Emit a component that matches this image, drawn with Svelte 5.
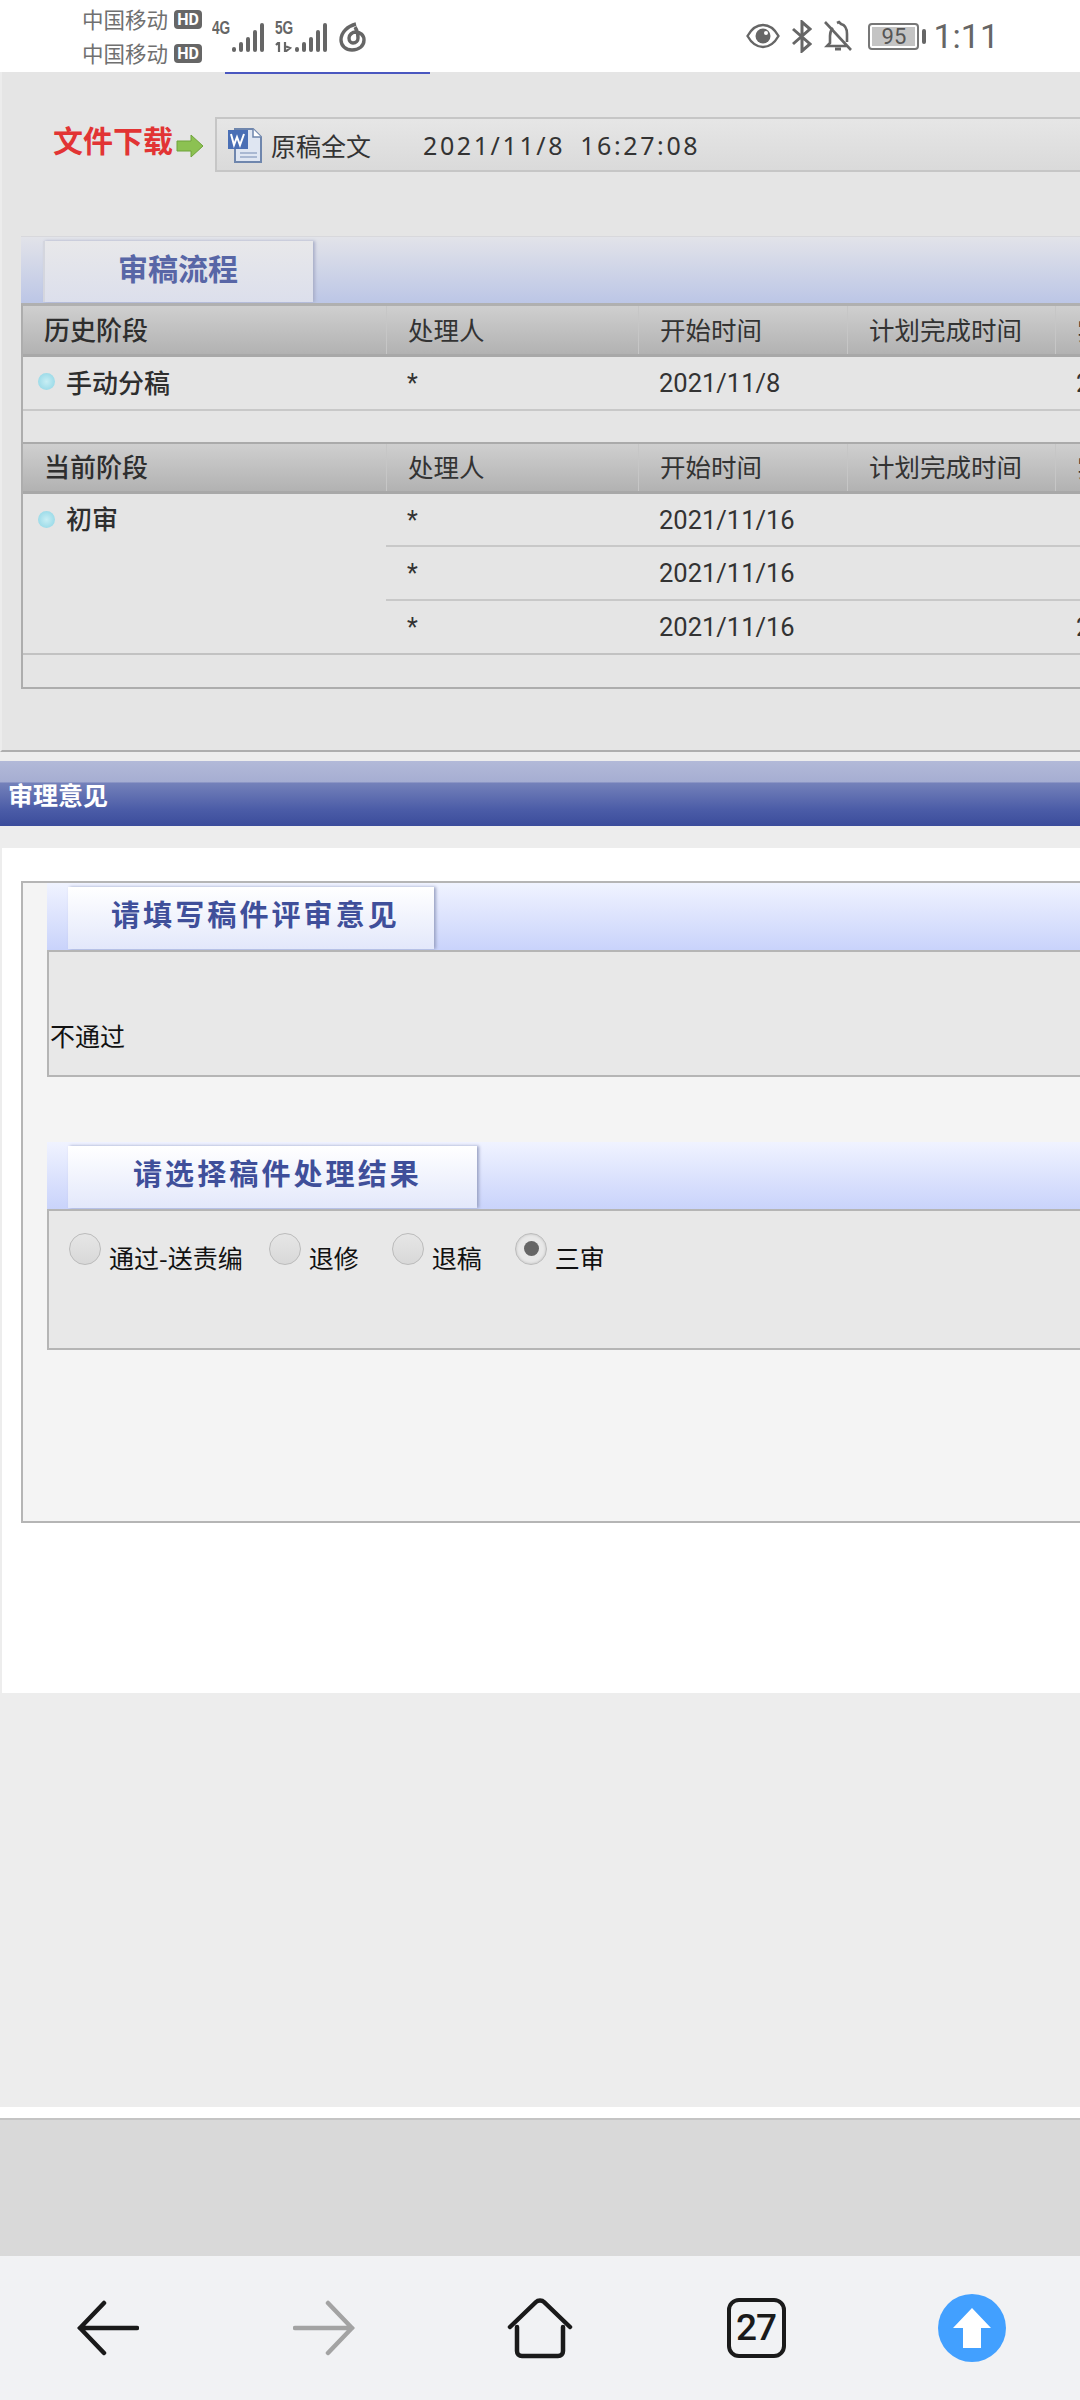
<script>
  const sans = ['历史阶段', '处理人', '开始时间', '计划完成时间', '实际完成时间'];
  const current = ['当前阶段', '处理人', '开始时间', '计划完成时间', '实际完成时间'];
  const currentRows = [
    { date: '2021/11/16', end: '' },
    { date: '2021/11/16', end: '' },
    { date: '2021/11/16', end: '2021/11/16' }
  ];
  const results = [
    { label: '通过-送责编', checked: false },
    { label: '退修', checked: false },
    { label: '退稿', checked: false },
    { label: '三审', checked: true }
  ];
  const signal = [5, 10, 15, 22, 29];
</script>

<div class="phone">
  <header class="status">
    <div class="left">
      <div class="carriers">
        <div class="carrier">中国移动 <span class="hd">HD</span></div>
        <div class="carrier">中国移动 <span class="hd">HD</span></div>
      </div>
      <div class="net">
        <span class="gen">4G</span>
        <div class="bars">
          {#each signal as h}<i style="height:{h}px"></i>{/each}
        </div>
      </div>
      <div class="net five">
        <span class="gen">5G</span>
        <div class="bars">
          <svg width="18" height="10" viewBox="0 0 18 10"><path d="M4 0v10M1 3l3-3M10 0v10l5-4-5-2" fill="none" stroke="#666" stroke-width="2.2"/></svg>
          {#each signal as h}<i style="height:{h}px"></i>{/each}
        </div>
      </div>
      <svg class="cloud" width="28" height="30" viewBox="0 0 28 30" fill="none" stroke="#666" stroke-width="3.4">
        <path d="M17 2C9 4 2 10 2 18c0 6 5 10 11 10 7 0 12-4 12-10 0-5-4-8-8-8-4 0-7 3-7 6 0 3 2 5 4 5 3 0 5-2 5-5 0-4-1-8-3-11"/>
      </svg>
    </div>
    <div class="right">
      <svg width="34" height="26" viewBox="0 0 34 26">
        <path d="M1.5 13C6 5 11 2 17 2s11 3 15.500 11C28 21 23 24 17 24S6 21 1.500 13z" fill="none" stroke="#666" stroke-width="2.400"/>
        <circle cx="17" cy="13" r="7.500" fill="#666"/><circle cx="20" cy="10" r="2" fill="#fff"/>
      </svg>
      <svg width="20" height="33" viewBox="0 0 20 33" fill="none" stroke="#666" stroke-width="3">
        <path d="M1 9l17 15-8 7V2l8 7L1 24"/>
      </svg>
      <svg width="28" height="32" viewBox="0 0 28 32" fill="none" stroke="#666" stroke-width="2.600">
        <path d="M1 2l26 28M9 8c-2 2-3 5-3 8v7l-3 3h20M13 3l2-1 2 2c4 1 6 5 6 10v8"/>
        <path d="M11 29h6" stroke-width="3"/>
      </svg>
      <div class="battery">
        <div class="cell"><span>95</span></div>
        <i></i>
      </div>
      <span class="time">1:11</span>
    </div>
  </header>

  <div class="content">
    <section class="upper">
      <div class="strip"></div>
      <div class="download">
        <span class="dl-label">文件下载</span>
        <svg class="dl-arrow" width="28" height="24" viewBox="0 0 28 24">
          <path d="M1 7h14V1l12 11-12 11v-6H1z" fill="#8cc152" stroke="#6fa33a" stroke-width="1"/>
        </svg>
        <div class="dl-box">
          <svg width="36" height="36" viewBox="0 0 36 36">
            <path d="M8 2h18l8 8v25H8z" fill="#dfe6f2" stroke="#6f86ad" stroke-width="2"/>
            <path d="M26 2v8h8" fill="#fff" stroke="#6f86ad" stroke-width="1.500"/>
            <rect x="1" y="3" width="20" height="19" fill="#4a6fb5"/>
            <path d="M4 7l3 11 3-8 3 8 4-11" fill="none" stroke="#fff" stroke-width="2"/>
            <path d="M13 26h17M13 30h17" stroke="#a9b8d2" stroke-width="2"/>
          </svg>
          <span class="dl-name">原稿全文</span>
          <span class="dl-date">2021/11/8 16:27:08</span>
        </div>
      </div>

      <div class="flow">
        <div class="flow-head">
          <div class="flow-tab">审稿流程</div>
        </div>
        <div class="flow-table">
          <div class="row head">
            {#each sans as c, i}
              <div class="cell" class:first={i === 0}>{c}</div>
            {/each}
          </div>
          <div class="row body">
            <div class="cell stage"><b class="dot"></b>手动分稿</div>
            <div class="cell star">*</div>
            <div class="cell">2021/11/8</div>
            <div class="cell"></div>
            <div class="cell">2021/11/8</div>
          </div>
          <div class="spacer"></div>
          <div class="row head">
            {#each current as c, i}
              <div class="cell" class:first={i === 0}>{c}</div>
            {/each}
          </div>
          <div class="current">
            <div class="cell stage top"><b class="dot"></b>初审</div>
            <div class="cur-rows">
              {#each currentRows as r}
                <div class="row sub">
                  <div class="cell star">*</div>
                  <div class="cell">{r.date}</div>
                  <div class="cell"></div>
                  <div class="cell">{r.end}</div>
                </div>
              {/each}
            </div>
          </div>
          <div class="spacer end"></div>
        </div>
      </div>
    </section>

    <div class="band">审理意见</div>

    <section class="panel">
      <div class="box">
        <div class="sec-head"><div class="sec-tab wide">请填写稿件评审意见</div></div>
        <div class="sec-body opinion">不通过</div>

        <div class="sec-head second"><div class="sec-tab wider">请选择稿件处理结果</div></div>
        <div class="sec-body radios">
          {#each results as r}
            <div class="radio-item">
              <span class="radio" class:on={r.checked}></span>
              <span class="radio-label">{r.label}</span>
            </div>
          {/each}
        </div>
      </div>
    </section>

    <div class="rest"></div>
    <div class="foot"></div>
  </div>

  <nav class="nav">
    <svg width="62" height="56" viewBox="0 0 62 56" fill="none" stroke="#1a1a1a" stroke-width="4.500" stroke-linecap="round">
      <path d="M3 28h57M27 3L3 28l24 25"/>
    </svg>
    <svg width="62" height="56" viewBox="0 0 62 56" fill="none" stroke="#a3a3a3" stroke-width="4.500" stroke-linecap="round">
      <path d="M59 28H2M35 3l24 25-24 25"/>
    </svg>
    <svg width="66" height="62" viewBox="0 0 66 62" fill="none" stroke="#1a1a1a" stroke-width="4.500" stroke-linecap="round" stroke-linejoin="round">
      <path d="M3 30L29 5c2-2 6-2 8 0l26 25M10 30v24c0 3 2 5 5 5h36c3 0 5-2 5-5V30"/>
    </svg>
    <div class="tabs">27</div>
    <svg width="68" height="68" viewBox="0 0 68 68">
      <circle cx="34" cy="34" r="34" fill="#42a0ff"/>
      <path d="M34 14l19 20H43v20H25V34H15z" fill="#fff"/>
    </svg>
  </nav>
</div>

<style>
  :global(body) { margin: 0; }
  .phone {
    width: 1080px;
    height: 2400px;
    display: flex;
    flex-direction: column;
    overflow: hidden;
    font-family: "Noto Sans CJK SC", Roboto, sans-serif;
    background: #ededed;
  }

  .status {
    height: 72px;
    flex: none;
    background: #fff;
    display: flex;
    justify-content: space-between;
    align-items: center;
    padding: 0 81px 0 82px;
    color: #666;
  }
  .left, .right { display: flex; align-items: center; }
  .carriers { display: flex; flex-direction: column; gap: 12px; }
  .carrier { font-size: 21.500px; line-height: 22px; display: flex; gap: 6px; align-items: center; color: #707070; }
  .hd {
    background: #666;
    color: #fff;
    font: 700 16px/19px Roboto, sans-serif;
    width: 28px;
    height: 19px;
    text-align: center;
    border-radius: 4px;
  }
  .net { position: relative; height: 32px; width: 52px; margin-left: 10px; }
  .net.five { margin-left: 11px; }
  .gen {
    position: absolute;
    left: 0;
    top: -2px;
    font: 700 19px/20px "Liberation Sans", sans-serif;
    transform: scaleX(.72);
    transform-origin: left;
  }
  .bars {
    position: absolute;
    right: 0;
    bottom: 0;
    display: flex;
    align-items: flex-end;
    gap: 3px;
  }
  .bars i { width: 4px; background: #666; border-radius: 2px; }
  .bars svg { margin-right: -1px; }
  .five { width: 52px; }
  .cloud { margin-left: 12px; margin-top: 2px; }

  .right { gap: 12px; }
  .battery { display: flex; align-items: center; gap: 3px; margin-left: 4px; }
  .battery .cell {
    width: 51px;
    height: 27px;
    box-sizing: border-box;
    border: 2px solid #777;
    border-radius: 4px;
    padding: 2px;
    display: flex;
  }
  .battery .cell span {
    flex: 1;
    background: #c4c4c4;
    font: 22px/19px Roboto, sans-serif;
    text-align: center;
    color: #555;
  }
  .battery i { width: 4px; height: 15px; background: #666; border-radius: 2px; }
  .time { font: 34px/40px Roboto, sans-serif; margin-left: -5px; }

  .content { flex: 1; display: flex; flex-direction: column; min-height: 0; }

  .upper {
    height: 680px;
    flex: none;
    box-sizing: border-box;
    background: #e5e5e5;
    border-left: 2px solid #ececec;
    border-bottom: 2px solid #aeaeae;
  }
  .strip { height: 2px; width: 205px; margin-left: 223px; background: #4a57c0; }
  .download { display: flex; align-items: center; padding: 43px 0 0 51px; height: 55px; }
  .dl-label { flex: none; font-size: 30px; font-weight: 700; color: #e23434; width: 123px; line-height: 55px; white-space: nowrap; margin-top: -10px; }
  .dl-arrow { flex: none; margin-right: 11px; margin-top: 2px; }
  .dl-box {
    flex: none;
    width: 900px;
    height: 55px;
    box-sizing: border-box;
    border: 2px solid #c6c6c6;
    border-right: 0;
    background: linear-gradient(#e6e6e6, #dadada);
    display: flex;
    align-items: center;
    padding-left: 10px;
    color: #333;
  }
  .dl-name { font-size: 25px; margin-left: 8px; width: 152px; }
  .dl-date { font: 25px "Noto Sans", sans-serif; letter-spacing: 2.600px; word-spacing: 6px; }

  .flow { margin: 64px 0 0 19px; width: 1200px; }
  .flow-head {
    height: 67px;
    box-sizing: border-box;
    padding: 4px 0 0 22px;
    background: linear-gradient(#e2e3e9, #bcc6e6);
    border-top: 1px solid #d8d8dc;
  }
  .flow-tab {
    width: 270px;
    height: 61px;
    box-sizing: border-box;
    background: linear-gradient(#e8e8ea, #dcdfec);
    box-shadow: 2px 0 3px #a8aec8;
    border-left: 2px solid #d4d6de;
    color: #5866a6;
    font-size: 30px;
    font-weight: 700;
    line-height: 52px;
    text-align: center;
    padding-right: 2px;
  }
  .flow-table {
    border-left: 2px solid #adadad;
    border-bottom: 2px solid #adadad;
    border-top: 3px solid #b0b0b0;
    color: #333;
  }
  .row { display: grid; grid-template-columns: 363px 252px 209px 208px 200px; }
  .row .cell, .current > .cell { box-sizing: border-box; }
  .head {
    height: 51px;
    background: linear-gradient(#cfcfcf, #b2b2b2);
    border-bottom: 3px solid #a8a8a8;
    box-sizing: border-box;
    font-size: 25.500px;
    line-height: 46px;
  }
  .head .cell { padding-left: 21px; border-left: 1px solid #c6c6c6; white-space: nowrap; }
  .head .first { padding-left: 21px; border-left: 0; font-weight: 500; font-size: 26px; color: #2e2e2e; }
  .body {
    height: 54px;
    box-sizing: border-box;
    border-bottom: 2px solid #c8c8c8;
    font: 25.500px/52px Roboto, "Noto Sans CJK SC", sans-serif;
  }
  .body .cell, .sub .cell { padding-left: 21px; white-space: nowrap; }
  .stage {
    flex: none;
    font: 500 26px/48px "Noto Sans CJK SC", sans-serif;
    color: #2e2e2e;
    display: flex;
    align-items: center;
    padding-left: 15px !important;
    gap: 11px;
  }
  .body .stage { padding-bottom: 4px; }
  .stage.top { align-items: flex-start; width: 363px; height: 159px; }
  .star { font-size: 25px; line-height: 53px !important; }
  .dot {
    flex: none;
    width: 17px;
    height: 17px;
    border-radius: 50%;
    background: radial-gradient(circle at 50% 50%, #c8eef4, #8cd4e4);
  }
  .stage.top .dot { margin-top: 17px; }
  .spacer { height: 31px; }
  .spacer.end { height: 32px; }
  .flow-table > .head:not(:first-child) { border-top: 2px solid #aaa; height: 52px; line-height: 44px; }
  .current { display: flex; border-bottom: 2px solid #c2c2c2; }
  .cur-rows { flex: 1; }
  .sub {
    grid-template-columns: 252px 209px 208px 200px;
    height: 54px;
    box-sizing: border-box;
    border-bottom: 2px solid #c8c8c8;
    font: 25.500px/52px Roboto, "Noto Sans CJK SC", sans-serif;
  }
  .sub:first-child { height: 53px; }
  .sub:last-child { border-bottom: 0; height: 52px; }

  .band {
    flex: none;
    margin-top: 9px;
    height: 65px;
    background: linear-gradient(#b2b9d8 0, #a6aed2 32%, #7481ba 34%, #4b5ca7 75%, #3b4c9b 100%);
    color: #fff;
    font-size: 25px;
    font-weight: 700;
    line-height: 66px;
    padding-left: 8px;
  }
  .panel {
    flex: none;
    margin: 22px 0 0 2px;
    height: 845px;
    box-sizing: border-box;
    background: #fff;
    padding: 33px 0 0 19px;
  }
  .box {
    width: 1200px;
    height: 642px;
    box-sizing: border-box;
    background: #f4f4f4;
    border: 2px solid #b5b5b5;
    padding-left: 24px;
  }
  .sec-head {
    height: 67px;
    box-sizing: border-box;
    padding: 4px 0 0 21px;
    background: linear-gradient(#f0f3ff, #c9d3fb);
  }
  .sec-head.second { margin-top: 65px; }
  .sec-tab {
    height: 62px;
    box-sizing: border-box;
    background: linear-gradient(#fff, #e3e8fb);
    box-shadow: 2px 0 3px #9aa2c4;
    color: #3f4f9a;
    font-size: 29px;
    font-weight: 700;
    line-height: 52px;
    letter-spacing: 3.100px;
  }
  .wide { width: 366px; padding-left: 43px; }
  .wider { width: 409px; padding-left: 65px; }
  .sec-body {
    box-sizing: border-box;
    background: #e8e8e8;
    border: 2px solid #b5b5b5;
    border-right: 0;
    color: #111;
    font-size: 25px;
  }
  .opinion { height: 127px; padding: 65px 0 0 1px; line-height: 36px; }
  .radios {
    height: 141px;
    display: flex;
    align-items: flex-start;
    padding: 22px 0 0 20px;
    gap: 33px;
  }
  .radio-item { display: flex; gap: 8px; align-items: flex-start; flex: none; }
  .radio-item:first-child { margin-right: -7px; }
  .radio {
    flex: none;
    width: 32px;
    height: 32px;
    box-sizing: border-box;
    border-radius: 50%;
    border: 1px solid #bbb;
    background: linear-gradient(#e6e6e6, #d8d8d8);
    position: relative;
  }
  .radio.on { background: #e8e8e8; box-shadow: inset 0 0 3px #bbb; }
  .radio.on::after {
    content: "";
    position: absolute;
    left: 8px;
    top: 7px;
    width: 15px;
    height: 15px;
    border-radius: 50%;
    background: #666;
  }
  .radio-label { line-height: 34px; margin-top: 7px; }

  .rest { flex: none; height: 414px; background: #ededed; }
  .foot {
    flex: 1;
    background: #d9d9d9;
    border-top: 11px solid #fff;
    box-shadow: inset 0 2px 0 #c4c4c4;
  }

  .nav {
    height: 144px;
    flex: none;
    background: #f1f2f4;
    display: grid;
    grid-template-columns: repeat(5, 216px);
    justify-items: center;
    align-items: center;
  }
  .tabs {
    width: 59px;
    height: 60px;
    box-sizing: border-box;
    border: 4.500px solid #1a1a1a;
    border-radius: 12px;
    color: #1a1a1a;
    font: 500 37px/51px Roboto, sans-serif;
    letter-spacing: -1px;
    text-align: center;
  }
</style>
